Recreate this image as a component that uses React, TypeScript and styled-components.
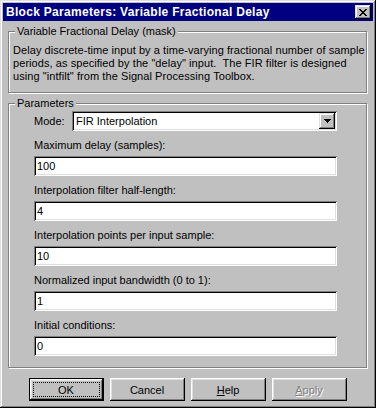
import styled, { createGlobalStyle } from 'styled-components';

const GlobalStyle = createGlobalStyle`
  html, body {
    margin: 0;
    padding: 0;
    background: #c0c0c0;
  }
  body {
    font-family: "Liberation Sans", Arial, sans-serif;
    font-size: 11px;
    color: #000;
  }
`;

const fields = [
  { label: 'Maximum delay (samples):', value: '100' },
  { label: 'Interpolation filter half-length:', value: '4' },
  { label: 'Interpolation points per input sample:', value: '10' },
  { label: 'Normalized input bandwidth (0 to 1):', value: '1' },
  { label: 'Initial conditions:', value: '0' },
];

const CloseGlyph = () => (
  <svg width="8" height="7" viewBox="0 0 8 7" shapeRendering="crispEdges">
    <path
      fill="#000"
      d="M0 0h2v1H0zM6 0h2v1H6zM1 1h2v1H1zM5 1h2v1H5zM2 2h4v1H2zM3 3h2v1H3zM2 4h4v1H2zM1 5h2v1H1zM5 5h2v1H5zM0 6h2v1H0zM6 6h2v1H6z"
    />
  </svg>
);

const DownArrow = () => (
  <svg width="7" height="4" viewBox="0 0 7 4" shapeRendering="crispEdges">
    <path fill="#000" d="M0 0h7v1H0zM1 1h5v1H1zM2 2h3v1H2zM3 3h1v1H3z" />
  </svg>
);

export default function App() {
  return (
    <>
      <GlobalStyle />
      <Window>
        <TitleBar>
          <TitleText>Block Parameters: Variable Fractional Delay</TitleText>
          <CloseButton>
            <CloseGlyph />
          </CloseButton>
        </TitleBar>

        <Body>
          <Group>
            <GroupLabel>Variable Fractional Delay (mask)</GroupLabel>
            <Description>
              <div>Delay discrete-time input by a time-varying fractional number of sample</div>
              <div>periods, as specified by the "delay" input.&nbsp; The FIR filter is designed</div>
              <div>using "intfilt" from the Signal Processing Toolbox.</div>
            </Description>
          </Group>

          <ParamGroup>
            <GroupLabel>Parameters</GroupLabel>
            <ParamContent>
              <ModeRow>
                <ModeLabel>Mode:</ModeLabel>
                <Combo>
                  <ComboText>FIR Interpolation</ComboText>
                  <ComboButton>
                    <DownArrow />
                  </ComboButton>
                </Combo>
              </ModeRow>
              {fields.map((field) => (
                <Field key={field.label}>
                  <FieldLabel>{field.label}</FieldLabel>
                  <TextBox>{field.value}</TextBox>
                </Field>
              ))}
            </ParamContent>
          </ParamGroup>

          <ButtonRow>
            <Button $isDefault>
              <Focus>OK</Focus>
            </Button>
            <Button>Cancel</Button>
            <Button>
              <span><u>H</u>elp</span>
            </Button>
            <Button $disabled>
              <span><u>A</u>pply</span>
            </Button>
          </ButtonRow>
        </Body>
      </Window>
    </>
  );
}

const raised = `
  box-shadow: inset -1px -1px #000, inset 1px 1px #fff, inset -2px -2px #808080, inset 2px 2px #dfdfdf;
`;

const sunken = `
  box-shadow: inset 1px 1px #808080, inset -1px -1px #fff, inset 2px 2px #000, inset -2px -2px #dfdfdf;
`;

const Window = styled.div`
  width: 376px;
  height: 408px;
  box-sizing: border-box;
  padding: 3px;
  background: #c0c0c0;
  box-shadow: inset -1px -1px #000, inset 1px 1px #dfdfdf, inset -2px -2px #808080, inset 2px 2px #fff;
  display: flex;
  flex-direction: column;
`;

const TitleBar = styled.div`
  height: 18px;
  background: #000080;
  display: flex;
  align-items: center;
  padding: 0 2px 0 3px;
`;

const TitleText = styled.div`
  flex: 1;
  color: #fff;
  font-weight: bold;
  font-size: 12px;
  letter-spacing: 0.3px;
  white-space: nowrap;
`;

const CloseButton = styled.div`
  width: 16px;
  height: 14px;
  background: #c0c0c0;
  display: flex;
  align-items: center;
  justify-content: center;
  box-shadow: inset -1px -1px #000, inset 1px 1px #dfdfdf, inset -2px -2px #808080, inset 2px 2px #fff;
`;

const Body = styled.div`
  flex: 1;
  display: flex;
  flex-direction: column;
  padding: 4px 6px 0 5px;
`;

const Group = styled.fieldset`
  margin: 0;
  padding: 0;
  min-inline-size: 0;
  border: 1px solid #808080;
  box-shadow: 1px 1px 0 #fff, inset 1px 1px 0 #fff;
`;

const ParamGroup = styled(Group)`
  margin-top: 4px;
`;

const GroupLabel = styled.legend`
  margin-left: 6px;
  padding: 0 2px;
  line-height: 13px;
  background: #c0c0c0;
`;

const Description = styled.div`
  padding: 6px 4px 9px 4px;
  line-height: 13px;
  letter-spacing: 0.07px;
  white-space: nowrap;
`;

const ParamContent = styled.div`
  padding: 1px 29px 11px 25px;
  display: flex;
  flex-direction: column;
`;

const ModeRow = styled.div`
  display: flex;
  align-items: center;
`;

const ModeLabel = styled.div`
  width: 38px;
  line-height: 13px;
`;

const Combo = styled.div`
  flex: 1;
  height: 20px;
  box-sizing: border-box;
  background: #fff;
  display: flex;
  align-items: center;
  padding: 2px 2px 2px 4px;
  ${sunken}
`;

const ComboText = styled.div`
  flex: 1;
`;

const ComboButton = styled.div`
  width: 16px;
  height: 16px;
  box-sizing: border-box;
  background: #c0c0c0;
  display: flex;
  align-items: center;
  justify-content: center;
  box-shadow: inset -1px -1px #000, inset 1px 1px #dfdfdf, inset -2px -2px #808080, inset 2px 2px #fff;
`;

const Field = styled.div`
  display: flex;
  flex-direction: column;
`;

const FieldLabel = styled.div`
  margin: 8px 0 4px;
  line-height: 13px;
`;

const TextBox = styled.div`
  height: 20px;
  box-sizing: border-box;
  background: #fff;
  display: flex;
  align-items: center;
  padding: 0 3px;
  ${sunken}
`;

const ButtonRow = styled.div`
  display: flex;
  justify-content: center;
  gap: 6px;
  margin-top: 10px;
`;

const Button = styled.div<{ $isDefault?: boolean; $disabled?: boolean }>`
  width: 75px;
  height: 23px;
  box-sizing: border-box;
  display: flex;
  align-items: center;
  justify-content: center;
  background: #c0c0c0;
  ${raised}
  ${(props) =>
    props.$isDefault &&
    `box-shadow: inset 0 0 0 1px #000, inset -2px -2px #000, inset 2px 2px #fff, inset -3px -3px #808080, inset 3px 3px #dfdfdf;
     padding: 4px;`}
  ${(props) =>
    props.$disabled &&
    `color: #808080;
     text-shadow: 1px 1px 0 #fff;`}
`;

const Focus = styled.span`
  flex: 1;
  align-self: stretch;
  display: flex;
  align-items: center;
  justify-content: center;
  border: 1px dotted #000;
`;
